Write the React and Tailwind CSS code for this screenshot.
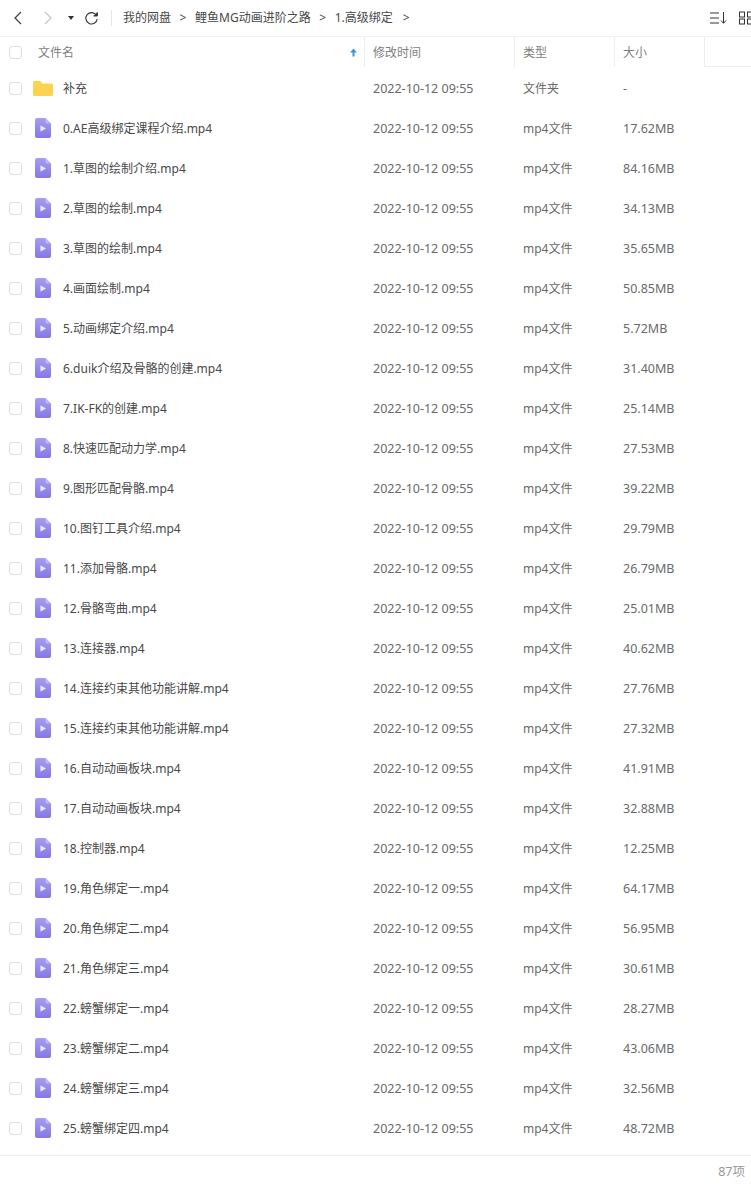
const files = [
  ["0.AE高级绑定课程介绍.mp4", "17.62MB"],
  ["1.草图的绘制介绍.mp4", "84.16MB"],
  ["2.草图的绘制.mp4", "34.13MB"],
  ["3.草图的绘制.mp4", "35.65MB"],
  ["4.画面绘制.mp4", "50.85MB"],
  ["5.动画绑定介绍.mp4", "5.72MB"],
  ["6.duik介绍及骨骼的创建.mp4", "31.40MB"],
  ["7.IK-FK的创建.mp4", "25.14MB"],
  ["8.快速匹配动力学.mp4", "27.53MB"],
  ["9.图形匹配骨骼.mp4", "39.22MB"],
  ["10.图钉工具介绍.mp4", "29.79MB"],
  ["11.添加骨骼.mp4", "26.79MB"],
  ["12.骨骼弯曲.mp4", "25.01MB"],
  ["13.连接器.mp4", "40.62MB"],
  ["14.连接约束其他功能讲解.mp4", "27.76MB"],
  ["15.连接约束其他功能讲解.mp4", "27.32MB"],
  ["16.自动动画板块.mp4", "41.91MB"],
  ["17.自动动画板块.mp4", "32.88MB"],
  ["18.控制器.mp4", "12.25MB"],
  ["19.角色绑定一.mp4", "64.17MB"],
  ["20.角色绑定二.mp4", "56.95MB"],
  ["21.角色绑定三.mp4", "30.61MB"],
  ["22.螃蟹绑定一.mp4", "28.27MB"],
  ["23.螃蟹绑定二.mp4", "43.06MB"],
  ["24.螃蟹绑定三.mp4", "32.56MB"],
  ["25.螃蟹绑定四.mp4", "48.72MB"],
];

function Check() {
  return <span className="block w-[13px] h-[13px] rounded-[3px] border border-[#dedede] bg-white" />;
}

function FolderIcon() {
  return (
    <svg width="20" height="15" viewBox="0 0 20 15">
      <path d="M1.500 0h5.500l2.500 2.500h9a1.500 1.500 0 0 1 1.500 1.500v9.500a1.500 1.500 0 0 1-1.500 1.500h-17a1.500 1.500 0 0 1-1.500-1.500v-12a1.500 1.500 0 0 1 1.500-1.500z" fill="#fbd34f" />
    </svg>
  );
}

function VideoIcon() {
  return (
    <svg width="16" height="20" viewBox="0 0 16 20">
      <defs>
        <linearGradient id="vid" x1="0" y1="0" x2="0" y2="1">
          <stop offset="0" stopColor="#a79cf0" />
          <stop offset="1" stopColor="#8479e6" />
        </linearGradient>
      </defs>
      <path d="M2 0h8.500l5.500 5.500v12.500a2 2 0 0 1-2 2h-12a2 2 0 0 1-2-2v-16a2 2 0 0 1 2-2z" fill="url(#vid)" />
      <path d="M10.500 0l5.500 5.500h-4a1.500 1.500 0 0 1-1.500-1.500z" fill="#beb7f5" />
      <path d="M5.500 7.500l5.500 3-5.500 3z" fill="#f1efff" />
    </svg>
  );
}

function Row({ icon, name, type, size }) {
  return (
    <div className="flex h-[40px] items-center">
      <div className="w-[33px] pl-[9px] shrink-0"><Check /></div>
      <div className="w-[20px] shrink-0 flex justify-center">{icon}</div>
      <div className="w-[320px] pl-[10px] pt-[2px] shrink-0 text-[#484848] whitespace-nowrap text-[12px]">{name}</div>
      <div className="w-[150px] pt-[2px] shrink-0 text-[#6a6a6a]">2022-10-12 09:55</div>
      <div className="w-[100px] pt-[2px] shrink-0 text-[#6a6a6a] text-[12px]">{type}</div>
      <div className="pt-[2px] text-[#6a6a6a]">{size}</div>
    </div>
  );
}

function HeadCell({ className, children }) {
  return (
    <div className={"flex h-full items-center border-r border-[#eeeeee] shrink-0 text-[12px] " + className}>{children}</div>
  );
}

export default function App() {
  return (
    <div className="w-[751px] h-[1186px] bg-white overflow-hidden text-[12.500px] font-['Noto_Sans','Noto_Sans_CJK_SC',sans-serif] flex flex-col">
      <div className="h-[37px] flex items-center border-b border-[#f2f2f2] shrink-0 text-[12px]">
        <svg className="ml-[12px]" width="12" height="16" viewBox="0 0 12 16" fill="none" stroke="#444" strokeWidth="1.300">
          <path d="M9 2L3 8l6 6" />
        </svg>
        <svg className="ml-[18px]" width="12" height="16" viewBox="0 0 12 16" fill="none" stroke="#c4c4c4" strokeWidth="1.200">
          <path d="M3 2l6 6-6 6" />
        </svg>
        <svg className="ml-[13px]" width="8" height="6" viewBox="0 0 8 6"><path d="M1 1h6L4 5z" fill="#333" /></svg>
        <svg className="ml-[9px]" width="15" height="15" viewBox="0 0 15 15" fill="none" stroke="#333" strokeWidth="1.100">
          <path d="M12.500 4.500A5.700 5.700 0 1 0 13.200 8" />
          <path d="M9.500 5h3.800V1.300" strokeWidth="1" fill="#333" />
        </svg>
        <div className="ml-[12px] h-[16px] border-l border-[#e5e5e5]" />
        <div className="ml-[11px] flex items-center text-[#484848] whitespace-nowrap">
          <span>我的网盘</span>
          <span className="w-[24px] text-center">&gt;</span>
          <span>鲤鱼MG动画进阶之路</span>
          <span className="w-[24px] text-center">&gt;</span>
          <span>1.高级绑定</span>
          <span className="ml-[10px]">&gt;</span>
        </div>
        <div className="ml-auto flex items-center">
          <svg width="18" height="14" viewBox="0 0 18 14" fill="none" stroke="#333" strokeWidth="1">
            <path d="M1 2h9M1 7h9M1 12h9M14.500 1v11M12 9.500l2.500 2.800 2.500-2.800" />
          </svg>
          <div className="w-[12px] overflow-hidden ml-[12px]">
            <svg width="15" height="14" viewBox="0 0 15 14" fill="none" stroke="#333" strokeWidth="1">
              <rect x="0.500" y="1" width="5" height="5" />
              <rect x="8.500" y="1" width="5" height="5" />
              <rect x="0.500" y="8" width="5" height="5" />
              <rect x="8.500" y="8" width="5" height="5" />
            </svg>
          </div>
        </div>
      </div>
      <div className="h-[30px] flex text-[#808080] shrink-0">
        <HeadCell className="w-[365px] relative">
          <div className="w-[38px] pl-[9px] shrink-0"><Check /></div>
          <span className="pt-[2px]">文件名</span>
          <svg className="absolute right-[6px] top-[11px]" width="9" height="9" viewBox="0 0 9 9">
            <path d="M4.500 0.500L8 4.500H5.500V8.500h-2V4.500H1z" fill="#3a9bc9" />
          </svg>
        </HeadCell>
        <HeadCell className="w-[150px] pl-[8px] pt-[2px]">修改时间</HeadCell>
        <HeadCell className="w-[100px] pl-[8px] pt-[2px]">类型</HeadCell>
        <HeadCell className="w-[90px] pl-[8px] pt-[2px]">大小</HeadCell>
        <div className="flex-1 border-b border-[#eeeeee]" />
      </div>
      <div className="h-[1px] shrink-0" />
      <Row icon={<FolderIcon />} name="补充" type="文件夹" size="-" />
      {files.map(([name, size]) => (
        <Row key={name} icon={<VideoIcon />} name={name} type="mp4文件" size={size} />
      ))}
      <div className="mt-[7px] border-t border-[#ececec] flex-1 flex items-center justify-end pr-[6px] pt-[2px] text-[#999]">87项</div>
    </div>
  );
}
